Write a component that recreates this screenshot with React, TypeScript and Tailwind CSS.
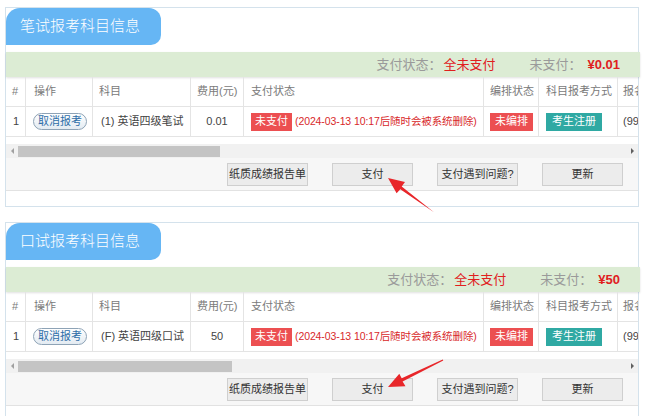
import React from "react";

const FONT = { fontFamily: '"Liberation Sans", "Noto Sans CJK SC", sans-serif' };

function Cell({ w, children, className = "", last = false }: { w: string; children?: React.ReactNode; className?: string; last?: boolean }) {
  return (
    <div className={`${w} shrink-0 flex items-center h-full whitespace-nowrap ${last ? "" : "border-r border-[#e4e4e4]"} ${className}`}>
      {children}
    </div>
  );
}

function Panel({ title, subj, fee, unpaid, thumb }: { title: string; subj: string; fee: string; unpaid: string; thumb: string }) {
  return (
    <div className="w-[634px] border border-[#d4e2ec] bg-white">
      <div className="flex">
        <div className="w-[155px] h-[37px] bg-[#66b6f4] rounded-[14px_12px_10px_0] flex items-center pl-[14px] text-white text-[15px] font-light">
          {title}
        </div>
      </div>
      <div className="mt-[7px] h-[25px] bg-[#dcecd4] flex items-center justify-end pr-[20px] text-[13px] mr-[-2px] shadow-[0_1px_2px_rgba(0,0,0,0.12)]">
        <span className="text-[#9a9a9a]">支付状态：</span>
        <span className="text-[#e0201e] ml-[2px]">全未支付</span>
        <span className="text-[#9a9a9a] ml-[34px]">未支付：</span>
        <span className="text-[#e0201e] font-bold ml-[6px]">¥{unpaid}</span>
      </div>
      <div className="overflow-hidden w-[632px]">
        <div className="flex h-[30px] border-b border-[#e4e4e4] text-[11px] text-[#7a7a7a] w-[720px]">
          <Cell w="w-[20px]" className="pl-[6px]">#</Cell>
          <Cell w="w-[67px]" className="pl-[8px]">操作</Cell>
          <Cell w="w-[98px]" className="pl-[6px]">科目</Cell>
          <Cell w="w-[53px]" className="pl-[6px]">费用(元)</Cell>
          <Cell w="w-[240px]" className="pl-[7px]">支付状态</Cell>
          <Cell w="w-[55px]" className="pl-[6px]">编排状态</Cell>
          <Cell w="w-[79px]" className="pl-[7px]">科目报考方式</Cell>
          <Cell w="w-[108px]" className="pl-[5px]" last>报名</Cell>
        </div>
        <div className="flex h-[30px] border-b border-[#e4e4e4] text-[11px] text-[#444] w-[720px]">
          <Cell w="w-[20px]" className="pl-[7px]">1</Cell>
          <Cell w="w-[67px]" className="pl-[7px]">
            <div className="w-[54px] h-[17px] rounded-full border border-[#8ea3b6] bg-gradient-to-b from-white to-[#e3ebf2] text-[#2f6ea8] flex items-center justify-center text-[11px]">
              取消报考
            </div>
          </Cell>
          <Cell w="w-[98px]" className="pl-[8px]">{subj}</Cell>
          <Cell w="w-[53px]" className="justify-center">{fee}</Cell>
          <Cell w="w-[240px]" className="pl-[7px]">
            <span className="bg-[#ec4f51] text-white h-[18px] px-[4px] flex items-center">未支付</span>
            <span className="text-[#d8282a] ml-[3px] text-[10.5px] tracking-[-0.1px]">(2024-03-13 10:17后随时会被系统删除)</span>
          </Cell>
          <Cell w="w-[55px]" className="pl-[6px]">
            <span className="bg-[#ec4f51] text-white h-[18px] px-[5px] flex items-center">未编排</span>
          </Cell>
          <Cell w="w-[79px]" className="pl-[7px]">
            <span className="bg-[#2fa9a3] text-white h-[18px] px-[6px] flex items-center">考生注册</span>
          </Cell>
          <Cell w="w-[108px]" className="pl-[5px]" last>(9999)</Cell>
        </div>
      </div>
      <div className="mt-[7px] h-[14px] bg-[#f1f1f1] flex items-center relative">
        <div className="w-0 h-0 border-y-[3px] border-y-transparent border-r-[3px] border-r-[#a0a0a0] ml-[5px]" />
        <div className={`${thumb} h-[11px] bg-[#c4c4c4] ml-[4px]`} />
        <div className="flex-1" />
        <div className="w-0 h-0 border-y-[3px] border-y-transparent border-l-[3px] border-l-[#606060] mr-[4px]" />
      </div>
      <div className="h-[33px] bg-[#f7f7f7] border-b border-[#e2e2e2] flex items-center justify-end gap-[24px] pr-[15px] text-[11px] text-[#333]">
        <div className="w-[81px] h-[23px] bg-[#ececec] border border-[#cfcfcf] flex items-center justify-center">纸质成绩报告单</div>
        <div className="w-[81px] h-[23px] bg-[#ececec] border border-[#cfcfcf] flex items-center justify-center">支付</div>
        <div className="w-[81px] h-[23px] bg-[#ececec] border border-[#cfcfcf] flex items-center justify-center">支付遇到问题?</div>
        <div className="w-[81px] h-[23px] bg-[#ececec] border border-[#cfcfcf] flex items-center justify-center">更新</div>
      </div>
      <div className="h-[15px]" />
    </div>
  );
}

export default function App() {
  return (
    <div className="relative w-[650px] h-[416px] bg-white overflow-hidden" style={FONT}>
      <div className="pl-[5px] pt-[7px] flex flex-col gap-[15px]">
        <Panel title="笔试报考科目信息" subj="(1) 英语四级笔试" fee="0.01" unpaid="0.01" thumb="w-[202px]" />
        <Panel title="口试报考科目信息" subj="(F) 英语四级口试" fee="50" unpaid="50" thumb="w-[214px]" />
      </div>
      <svg className="absolute left-0 top-0 pointer-events-none" width="650" height="416" viewBox="0 0 650 416">
        <polygon fill="#e8262a" points="388,178 396.6,193.2 400.3,189.2 435.4,213.2 434.6,212.8 401.7,186.4 405,182" />
        <polygon fill="#e8262a" points="388,387 405.5,386.3 402.6,381.6 443.3,360.6 442.7,359.4 401.7,378.3 399.3,373.7" />
      </svg>
    </div>
  );
}
